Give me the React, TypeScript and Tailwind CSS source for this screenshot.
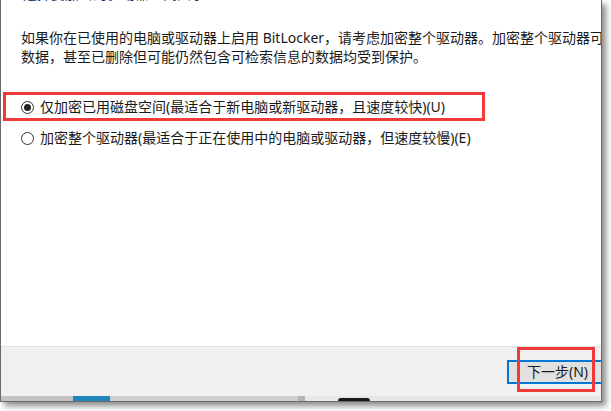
import React from 'react';

const font = { fontFamily: '"Noto Sans", "Noto Sans CJK SC", sans-serif' };

function Radio({ checked, label }: { checked?: boolean; label: string }) {
  return (
    <div className="flex h-[20px] items-center gap-[6px]">
      <span className="flex h-[13px] w-[13px] items-center justify-center rounded-full border border-[#333333] bg-white">
        {checked && <span className="h-[7px] w-[7px] rounded-full bg-[#222222]" />}
      </span>
      <span className="text-[14px] leading-[20px] text-[#1a1a1a] whitespace-nowrap">{label}</span>
    </div>
  );
}

export default function App() {
  return (
    <div className="relative h-[411px] w-[611px] overflow-hidden bg-white" style={font}>
      <div className="flex h-[402px] w-[602px] flex-col overflow-hidden border-b border-l border-r border-[#6b6b6b] bg-white shadow-[4px_4px_6px_rgba(0,0,0,0.45)]">
        <div className="flex flex-1 flex-col pl-[20px]">
          <div className="mt-[-15px] h-[17px] pl-[2px] text-[14px] leading-[17px] text-[#1c3a6e] whitespace-nowrap">
            选择要加密的驱动器空间大小
          </div>
          <div className="mt-[26px] text-[14px] leading-[19px] text-[#1a1a1a] whitespace-nowrap">
            <p>如果你在已使用的电脑或驱动器上启用 BitLocker，请考虑加密整个驱动器。加密整个驱动器可确保所有</p>
            <p>数据，甚至已删除但可能仍然包含可检索信息的数据均受到保护。</p>
          </div>
          <div className="mt-[31px]">
            <Radio checked label="仅加密已用磁盘空间(最适合于新电脑或新驱动器，且速度较快)(U)" />
          </div>
          <div className="mt-[11px]">
            <Radio label="加密整个驱动器(最适合于正在使用中的电脑或驱动器，但速度较慢)(E)" />
          </div>
        </div>
        <div className="flex h-[50px] items-center justify-end border-t border-[#e2e2e2] bg-[#f0f0f0]">
          <button className="mr-[-6px] flex h-[24px] w-[100px] items-center border-2 border-[#0078d7] bg-[#e1e1e1] pl-[18px] text-[14px] leading-[20px] text-[#1a1a1a]">
            下一步(N)
          </button>
        </div>
        <div className="flex h-[5px] bg-[#e6e6e6]">
          <div className="w-[72px] bg-[#c2c2c2]" />
          <div className="w-[37px] bg-[#1f86bd]" />
          <div className="w-[188px] bg-[#cfcfcf]" />
          <div className="w-[7px] bg-[#b5b5b5]" />
          <div className="w-[33px] bg-[#e8e8e8]" />
          <div className="mt-[2px] w-[32px] rounded-t-[3px] bg-[#1a1a1a]" />
        </div>
      </div>
      <div className="absolute left-[3px] top-[92px] h-[29px] w-[482px] border-[3px] border-[#f03a3a]" />
      <div className="absolute left-[517px] top-[347px] h-[45px] w-[78px] border-[3px] border-[#f03a3a]" />
    </div>
  );
}
